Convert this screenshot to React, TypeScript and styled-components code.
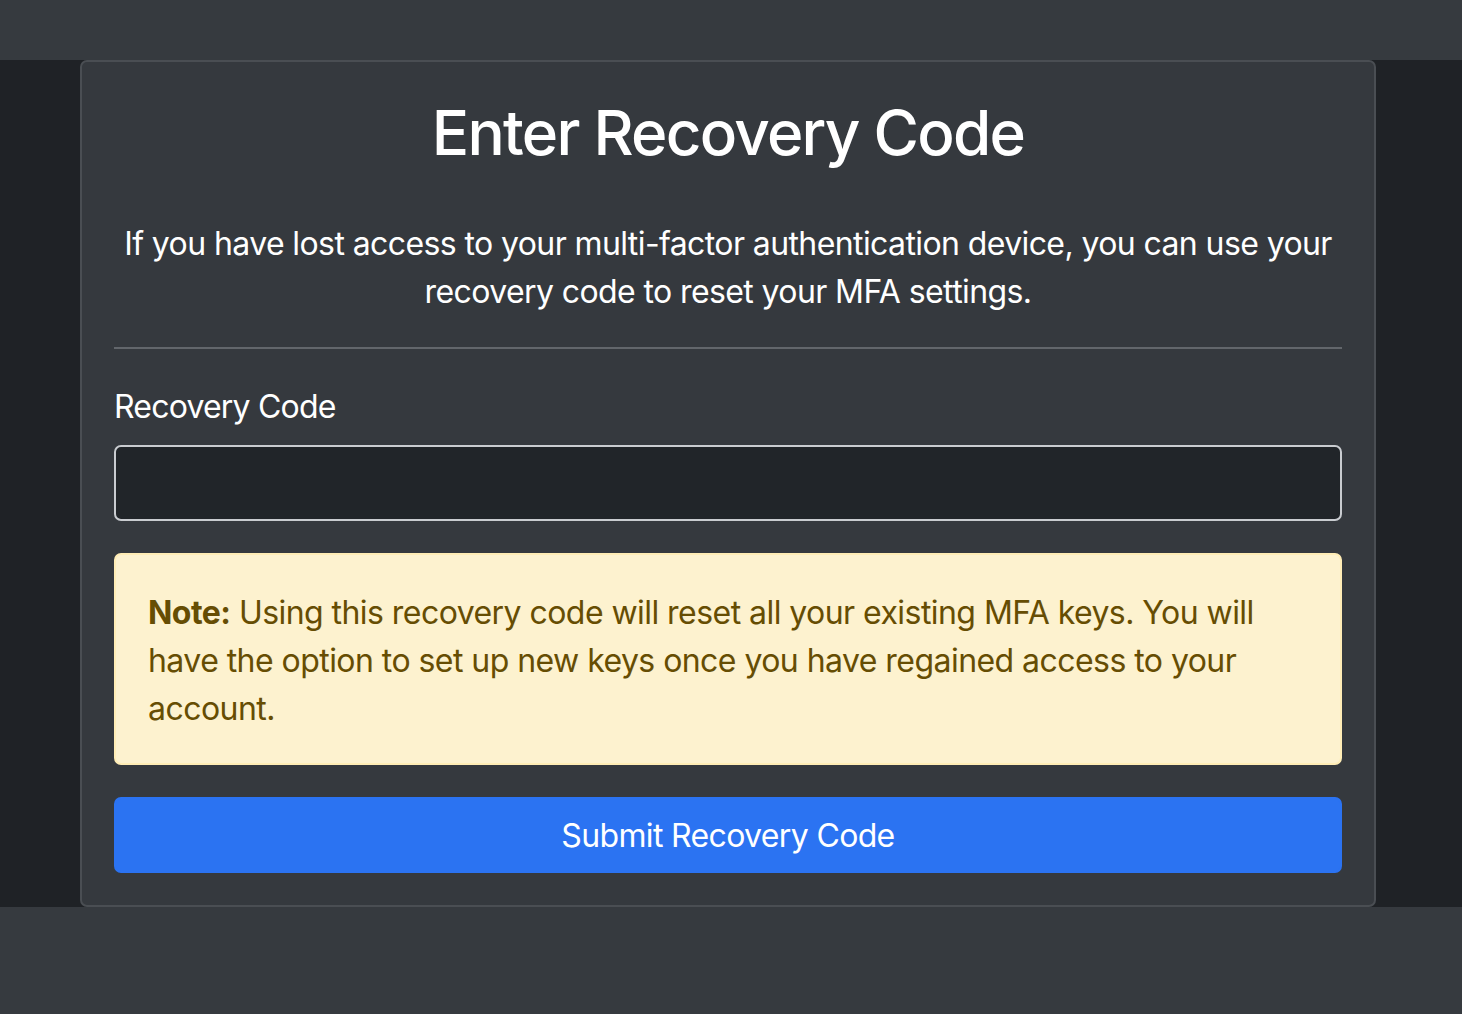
import React from 'react';
import styled, { createGlobalStyle } from 'styled-components';

const GlobalStyle = createGlobalStyle`
  html, body {
    margin: 0;
    padding: 0;
    background: #343a40;
  }
  body {
    font-family: Inter, "Noto Sans", "Liberation Sans", sans-serif;
    color: #ffffff;
    font-size: 32px;
    line-height: 48px;
  }
  * {
    box-sizing: border-box;
  }
`;

const Page = styled.div`
  display: flex;
  flex-direction: column;
  min-height: 1014px;
  background: #343a40;
`;

const TopBar = styled.header`
  height: 60px;
  background: #363a3f;
`;

const Main = styled.main`
  background: #1f2226;
  padding: 0 86px 0 80px;
`;

const Card = styled.section`
  background: #35393e;
  border: 2px solid #4a4e53;
  border-radius: 7px;
  padding: 32px;
`;

const Title = styled.h1`
  margin: 0 0 49px;
  text-align: center;
  font-size: 62px;
  line-height: 77px;
  font-weight: 500;
  letter-spacing: -1.75px;
`;

const Lead = styled.p`
  margin: 0 0 31px;
  text-align: center;
  letter-spacing: -0.6px;
`;

const Divider = styled.hr`
  margin: 0 0 34px;
  border: 0;
  border-top: 2px solid #62666b;
`;

const Label = styled.label`
  display: block;
  margin-bottom: 14px;
  letter-spacing: -0.8px;
`;

const Input = styled.input`
  display: block;
  width: 100%;
  height: 76px;
  margin-bottom: 32px;
  padding: 12px 24px;
  background: #212529;
  border: 2px solid #c9ccd0;
  border-radius: 7px;
  color: #fff;
  font: inherit;
  outline: none;
`;

const Alert = styled.div`
  margin-bottom: 32px;
  padding: 34px 32px 30px;
  background: #fdf2cf;
  border: 2px solid #ffedb6;
  border-radius: 7px;
  color: #664d03;
  letter-spacing: -0.55px;

  strong {
    font-weight: 700;
  }
`;

const SubmitButton = styled.button`
  display: block;
  width: 100%;
  height: 76px;
  padding: 13px 24px 11px;
  background: #2b73f2;
  border: 2px solid #2b73f2;
  border-radius: 7px;
  color: #fff;
  font: inherit;
  letter-spacing: -0.65px;
  cursor: pointer;
`;

const Bottom = styled.footer`
  flex: 1;
  background: #363a3f;
`;

const App: React.FC = () => {
  return (
    <>
      <GlobalStyle />
      <Page>
        <TopBar />
        <Main>
          <Card>
            <Title>Enter Recovery Code</Title>
            <Lead>
              If you have lost access to your multi-factor authentication device, you can use your
              <br />
              recovery code to reset your MFA settings.
            </Lead>
            <Divider />
            <Label htmlFor="recovery-code">Recovery Code</Label>
            <Input id="recovery-code" type="text" />
            <Alert>
              <strong>Note:</strong> Using this recovery code will reset all your existing MFA keys. You will
              <br />
              have the option to set up new keys once you have regained access to your
              <br />
              account.
            </Alert>
            <SubmitButton type="submit">Submit Recovery Code</SubmitButton>
          </Card>
        </Main>
        <Bottom />
      </Page>
    </>
  );
};

export default App;
